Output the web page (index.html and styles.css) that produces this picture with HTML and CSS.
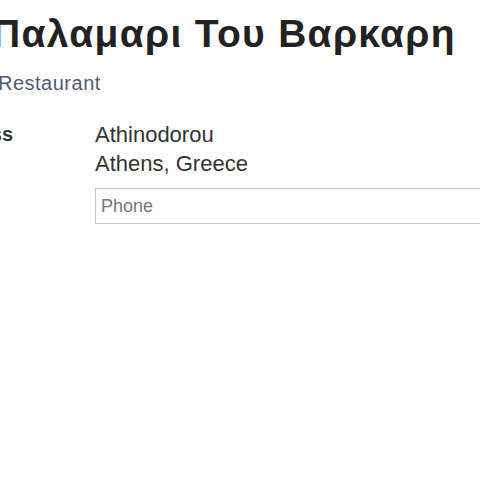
FILE: index.html
```html
<!DOCTYPE html>
<html lang="el">
<head>
<meta charset="utf-8">
<title>Παλαμαρι Του Βαρκαρη</title>
<link rel="stylesheet" href="styles.css">
</head>
<body>
<div class="page">
  <h1 class="title">Παλαμαρι Του Βαρκαρη</h1>
  <a class="category" href="#">Restaurant</a>
  <div class="info">
    <div class="label">Address</div>
    <div class="value">
      <div class="line">Athinodorou</div>
      <div class="line">Athens, Greece</div>
      <input class="phone" type="text" placeholder="Phone">
    </div>
  </div>
</div>
</body>
</html>
```
FILE: styles.css
```css
html, body {
  margin: 0;
  padding: 0;
  background: #ffffff;
}
body {
  font-family: "Liberation Sans", Arial, sans-serif;
  overflow: hidden;
}
.page {
  padding-top: 8px;
}
.title {
  margin: 0 0 0 -8px;
  font-size: 39px;
  font-weight: bold;
  letter-spacing: 1.3px;
  line-height: 52px;
  color: #222222;
}
.category {
  display: block;
  margin: 9px 0 0 -2px;
  font-size: 20px;
  letter-spacing: 0.5px;
  line-height: 28px;
  color: #4e5a78;
  text-decoration: none;
}
.info {
  display: grid;
  grid-template-columns: 13px 1fr;
  column-gap: 82px;
  margin-top: 23px;
}
.label {
  direction: rtl;
  white-space: nowrap;
  font-size: 20px;
  font-weight: bold;
  line-height: 29px;
  color: #333333;
  text-align: right;
}
.value {
  display: flex;
  flex-direction: column;
  font-size: 22px;
  line-height: 29px;
  color: #333333;
}
.phone {
  margin-top: 10px;
  width: 420px;
  height: 36px;
  box-sizing: border-box;
  border: 1px solid #c4c6ca;
  padding: 0 5px;
  font-family: "Liberation Sans", Arial, sans-serif;
  font-size: 18px;
  color: #333333;
  outline: none;
}
.phone::placeholder {
  color: #777777;
}
```
